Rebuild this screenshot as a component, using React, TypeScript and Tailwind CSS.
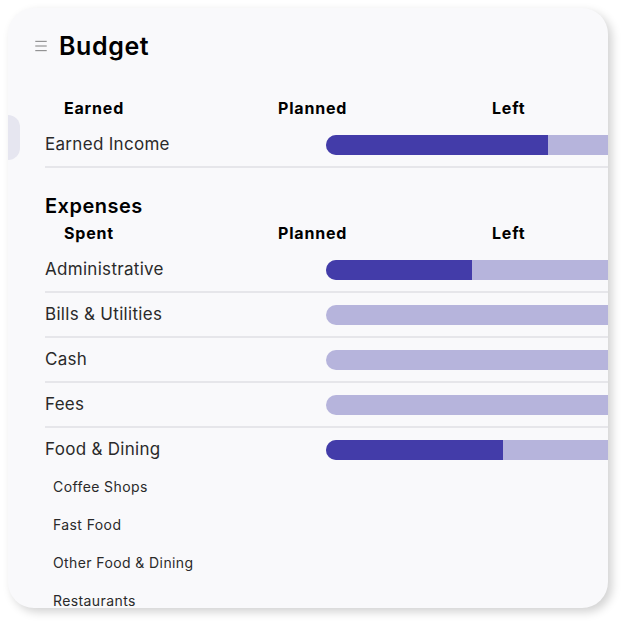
import { Menu } from "lucide-react"

const expenses = [
  { name: "Administrative", spent: 146 },
  { name: "Bills & Utilities", spent: 0 },
  { name: "Cash", spent: 0 },
  { name: "Fees", spent: 0 },
  { name: "Food & Dining", spent: 177 },
]

const foodItems = ["Coffee Shops", "Fast Food", "Other Food & Dining", "Restaurants"]

function Bar({ spent }: { spent: number }) {
  return (
    <div className="w-[340px] h-5 rounded-full bg-[#b6b4dc] overflow-hidden shrink-0 flex">
      <div className="h-full bg-[#433ca9]" style={{ width: spent }} />
    </div>
  )
}

function HeaderRow({ first }: { first: string }) {
  return (
    <div className="flex pl-[19px] text-[16px] leading-6 font-bold tracking-[0.8px] text-black">
      <span className="w-[214px]">{first}</span>
      <span className="w-[214px]">Planned</span>
      <span className="w-[214px]">Left</span>
    </div>
  )
}

function Row({ name, spent, last }: { name: string; spent: number; last?: boolean }) {
  return (
    <div className={`flex items-center h-[45px] border-b-2 ${last ? "border-transparent" : "border-[#e6e6ea]"}`}>
      <span className="w-[281px] shrink-0 text-[17px] tracking-[0.3px] text-[#2a2a2a]">{name}</span>
      <Bar spent={spent} />
    </div>
  )
}

export default function App() {
  return (
    <div className="w-[631px] h-[631px] bg-white p-2" style={{ fontFamily: "Inter, 'Open Sans', sans-serif" }}>
      <div className="relative w-[600px] h-[600px] rounded-[26px] bg-[#f9f9fb] shadow-[4px_4px_10px_rgba(0,0,0,0.18)] overflow-hidden">
        {/* side tab */}
        <div className="absolute left-0 top-[107px] w-3 h-[45px] rounded-r-xl bg-[#e6e6f0]" />

        {/* Title */}
        <div className="flex items-center gap-[10px] pl-[25px] pt-[22px] h-[54px]">
          <Menu className="w-4 h-4 text-[#808080]" strokeWidth={1.5} />
          <h1 className="text-[25px] font-semibold tracking-[0.6px] text-black leading-none">Budget</h1>
        </div>

        <div className="pl-[37px] w-[700px]">
          <div className="mt-[34px]">
            <HeaderRow first="Earned" />
          </div>
          <div className="mt-[3px]">
            <Row name="Earned Income" spent={222} />
          </div>

          <h2 className="mt-[28px] text-[20px] font-semibold tracking-[0.5px] text-black leading-none">Expenses</h2>
          <div className="mt-[5px]">
            <HeaderRow first="Spent" />
          </div>
          <div className="mt-[3px]">
            {expenses.map((e, i) => (
              <Row key={e.name} name={e.name} spent={e.spent} last={i === expenses.length - 1} />
            ))}
          </div>
          <div className="pl-2 -mt-[6px]">
            {foodItems.map((f) => (
              <div key={f} className="h-[38px] flex items-center text-[14px] tracking-[0.4px] text-[#2a2a2a]">
                {f}
              </div>
            ))}
          </div>
        </div>
      </div>
    </div>
  )
}
